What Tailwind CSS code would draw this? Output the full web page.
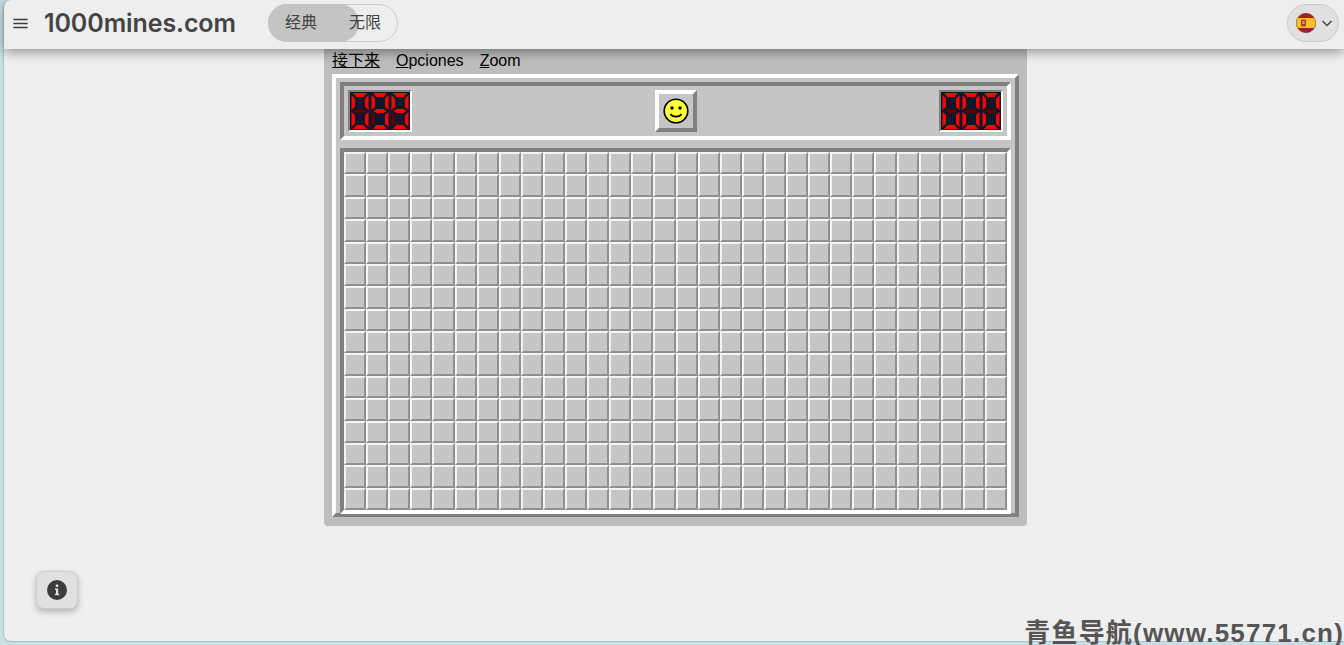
<!doctype html>
<html lang="zh">
<head>
  <meta charset="utf-8" />
  <title>1000mines.com</title>
  <script src="https://cdn.jsdelivr.net/npm/@tailwindcss/browser@4"></script>
</head>
<body class="h-[645px] w-[1344px] overflow-hidden bg-[#c6dfe4] font-['Liberation_Sans','Noto_Sans_CJK_SC',sans-serif]">
  <!-- digit shapes -->
  <svg class="hidden">
    <symbol id="d0" viewBox="0 0 20 38">
      <g fill="#ff0000"><path d="M3 1H17L13.5 5H6.5Z"/><path d="M1.5 3L5 6.5V15L1.5 18Z"/><path d="M18.5 3L15 6.5V15L18.5 18Z"/><path d="M1.5 20L5 23V31.5L1.5 35Z"/><path d="M18.5 20L15 23V31.5L18.5 35Z"/><path d="M3 37L6.5 33H13.5L17 37Z"/></g>
      <path fill="#5c0000" d="M3.5 19L6.5 17H13.5L16.5 19L13.5 21H6.5Z"/>
    </symbol>
    <symbol id="d9" viewBox="0 0 20 38">
      <g fill="#ff0000"><path d="M3 1H17L13.5 5H6.5Z"/><path d="M1.5 3L5 6.5V15L1.5 18Z"/><path d="M18.5 3L15 6.5V15L18.5 18Z"/><path d="M3.5 19L6.5 17H13.5L16.5 19L13.5 21H6.5Z"/><path d="M18.5 20L15 23V31.5L18.5 35Z"/><path d="M3 37L6.5 33H13.5L17 37Z"/></g>
      <path fill="#5c0000" d="M1.5 20L5 23V31.5L1.5 35Z"/>
    </symbol>
  </svg>

  <div class="relative ml-[3px] h-[642px] rounded-t-lg rounded-bl-lg border-b border-l border-[#a9c2c6] bg-[#efefef]">
    <header class="relative z-10 flex h-[49px] items-center rounded-tl-lg bg-[#eeeeee] pb-[3px] shadow-[0_3px_12px_rgba(0,0,0,0.4)]">
      <svg class="ml-[7px] h-[19px] w-[19px] text-[#3c3c3c]" viewBox="0 0 24 24" fill="currentColor"><path d="M3 18h18v-2H3v2zm0-5h18v-2H3v2zm0-7v2h18V6H3z"/></svg>
      <span class="ml-[14px] font-['Inter',sans-serif] text-[25px] leading-none font-semibold tracking-[-0.1px] text-[#444444]">1000mines.com</span>
      <div class="ml-[32px] flex h-[38px] w-[130px] items-center rounded-full border border-[#cccccc]">
        <div class="flex h-[38px] w-[91px] -ml-px items-center rounded-full bg-[#c4c4c4] pl-[17px] text-[16px] text-[#444444]">经典</div>
        <span class="relative ml-[-10px] text-[16px] text-[#444444]">无限</span>
      </div>
      <div class="ml-auto mr-[5px] flex h-[38px] w-[52px] items-center rounded-full border border-[#cccccc] bg-[#e0e0e0] pl-[8px]">
        <svg class="h-[20px] w-[20px]" viewBox="0 0 20 20">
          <clipPath id="flag"><circle cx="10" cy="10" r="10"/></clipPath>
          <g clip-path="url(#flag)">
            <rect width="20" height="20" fill="#a81e28"/>
            <rect y="5" width="20" height="10" fill="#f6c21c"/>
            <rect x="5" y="6.5" width="5" height="7" rx="1" fill="#a5452f"/>
            <rect x="6.5" y="8" width="2" height="3" fill="#e8a33a"/>
          </g>
          <circle cx="10" cy="10" r="9.6" fill="none" stroke="#555" stroke-opacity="0.5" stroke-width="0.8"/>
        </svg>
        <svg class="ml-[3px] h-[16px] w-[16px] text-[#444444]" viewBox="0 0 16 16" fill="none" stroke="currentColor" stroke-width="1.5"><path d="M3.5 6L8 10.5L12.5 6"/></svg>
      </div>
    </header>

    <main class="ml-[320px]">
      <div class="h-[477px] w-[703px] rounded-b-sm bg-[#bdbdbd] px-[8px]">
        <nav class="flex h-[25px] items-center gap-4 pb-[1px] text-[16px] leading-none text-black">
          <span class="underline">接下来</span>
          <span><span class="underline">O</span>pciones</span>
          <span><span class="underline">Z</span>oom</span>
        </nav>
        <!-- raised frame -->
        <div class="h-[443px] w-[687px] border-4 border-t-white border-l-white border-r-[#808080] border-b-[#808080] bg-[#c5c5c5] p-1">
          <!-- counters and face -->
          <div class="flex h-[58px] items-center justify-between border-4 border-t-[#808080] border-l-[#808080] border-r-white border-b-white px-[4px]">
            <div class="flex h-[42px] w-[64px] border-2 border-t-[#808080] border-l-[#808080] border-r-white border-b-white bg-[#10162a]">
              <svg class="h-[38px] w-[20px]"><use href="#d0"/></svg>
              <svg class="h-[38px] w-[20px]"><use href="#d9"/></svg>
              <svg class="h-[38px] w-[20px]"><use href="#d9"/></svg>
            </div>
            <div class="flex h-[42px] w-[42px] items-center justify-center border-4 border-t-white border-l-white border-r-[#808080] border-b-[#808080]">
              <svg class="h-[26px] w-[26px]" viewBox="0 0 26 26">
                <circle cx="13" cy="13" r="11.8" fill="#ffff33" stroke="#000" stroke-width="1.6"/>
                <circle cx="9" cy="10" r="1.7"/>
                <circle cx="17" cy="10" r="1.7"/>
                <path d="M7.5 16C9.5 19.5 16.5 19.5 18.5 16" fill="none" stroke="#000" stroke-width="1.6"/>
              </svg>
            </div>
            <div class="flex h-[42px] w-[64px] border-2 border-t-[#808080] border-l-[#808080] border-r-white border-b-white bg-[#10162a]">
              <svg class="h-[38px] w-[20px]"><use href="#d0"/></svg>
              <svg class="h-[38px] w-[20px]"><use href="#d0"/></svg>
              <svg class="h-[38px] w-[20px]"><use href="#d0"/></svg>
            </div>
          </div>
          <!-- board -->
          <div id="board" class="mt-[8px] grid h-[366px] w-[671px] grid-cols-[repeat(30,1fr)] grid-rows-[repeat(16,1fr)] border-4 border-t-[#808080] border-l-[#808080] border-r-white border-b-white"></div>
        </div>
      </div>
    </main>

    <button class="absolute left-[32px] top-[571px] z-10 flex h-[38px] w-[42px] items-center justify-center rounded-lg border border-[#cccccc] bg-[#e0e0e0] shadow-[0_3px_6px_rgba(0,0,0,0.25)]">
      <svg class="h-[24px] w-[24px] text-[#3c3c3c]" viewBox="0 0 24 24" fill="currentColor"><path fill-rule="evenodd" d="M12 2a10 10 0 1 0 0 20a10 10 0 0 0 0-20zM10.8 6.5h2.4v2.4h-2.4zM10 10.5h3.2v5.2h1v1.6H10v-1.6h1v-3.6h-1z"/></svg>
    </button>
  </div>

  <div class="absolute bottom-[-5px] right-0 z-20 whitespace-nowrap font-['Liberation_Sans','Noto_Sans_CJK_SC',sans-serif] text-[26px] leading-[33px] font-bold tracking-[1.2px] text-[#555555]"><span class="font-['Noto_Sans_CJK_SC',sans-serif]">青鱼导航</span>(www.55771.cn)</div>

  <script>
    const board = document.querySelector('#board');
    board.innerHTML = '<div class="border-2 border-t-[#f4f4f4] border-l-[#f4f4f4] border-r-[#909090] border-b-[#909090] bg-[#c6c6c6]"></div>'.repeat(30 * 16);
  </script>
</body>
</html>
